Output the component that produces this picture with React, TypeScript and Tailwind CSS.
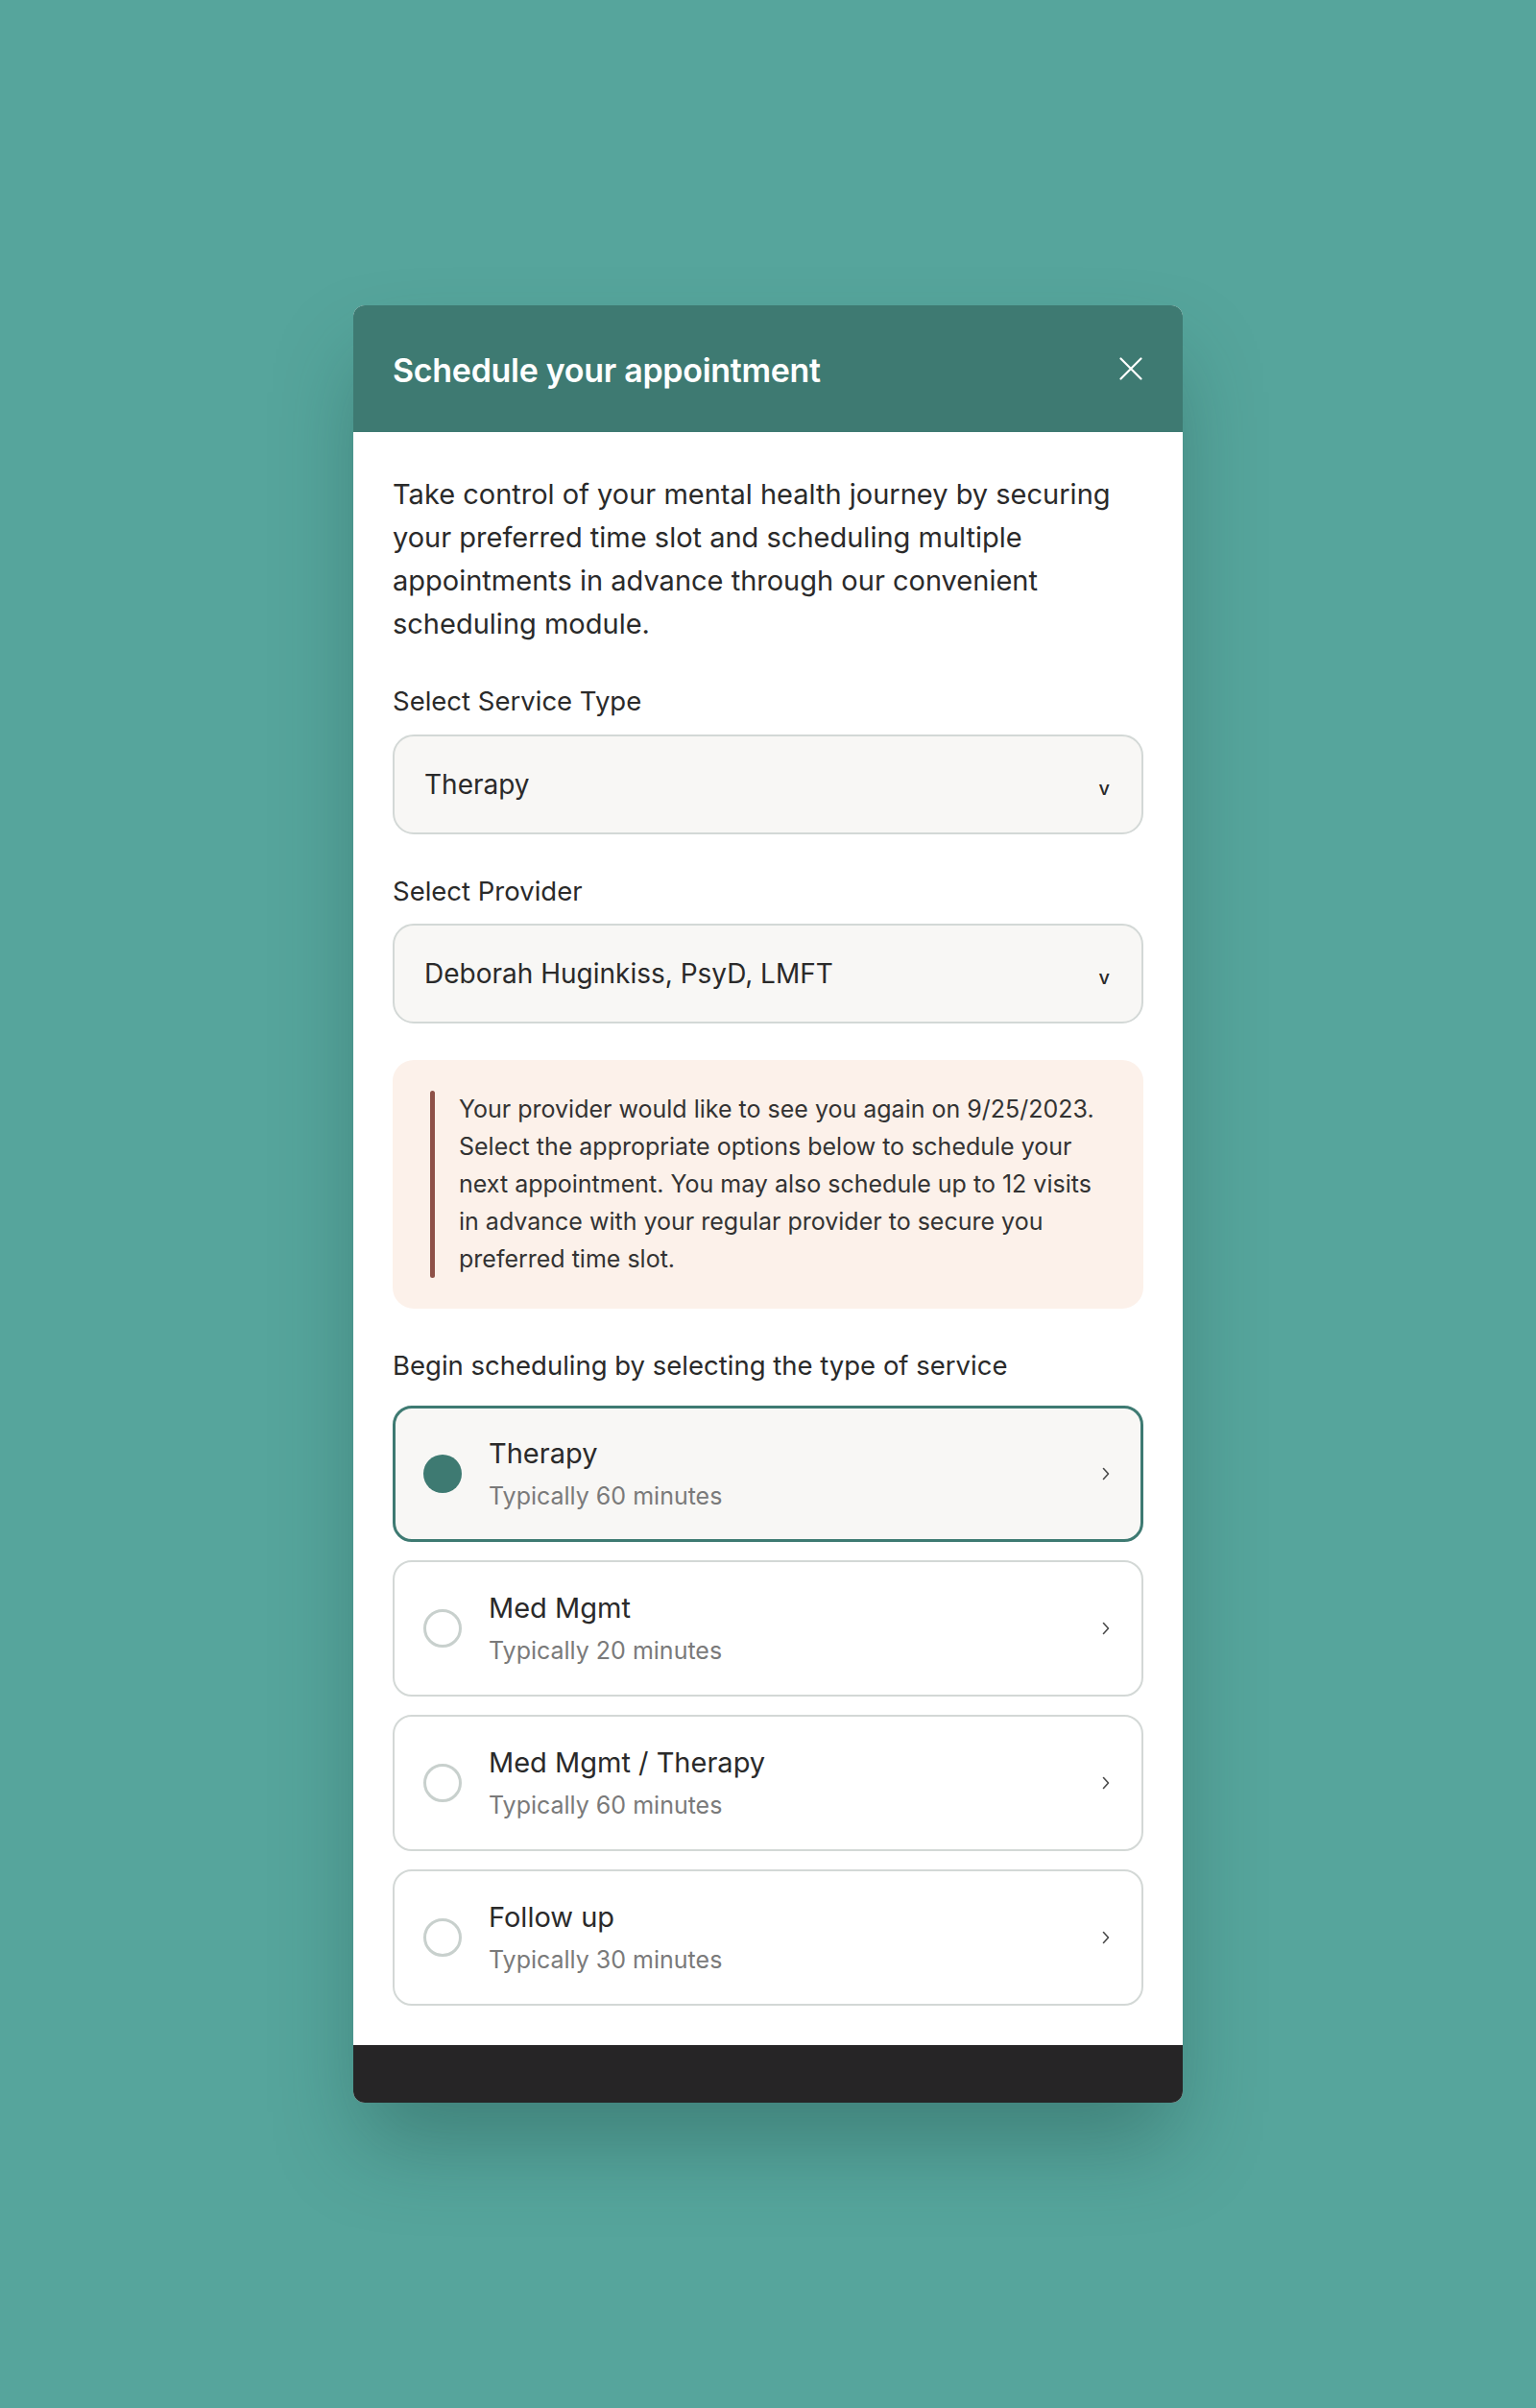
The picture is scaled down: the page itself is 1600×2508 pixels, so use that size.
import React from "react";

const options = [
  { title: "Therapy", sub: "Typically 60 minutes", selected: true },
  { title: "Med Mgmt", sub: "Typically 20 minutes", selected: false },
  { title: "Med Mgmt / Therapy", sub: "Typically 60 minutes", selected: false },
  { title: "Follow up", sub: "Typically 30 minutes", selected: false },
];

function Select({ value }: { value: string }) {
  return (
    <div className="flex h-[104px] items-center justify-between rounded-[22px] border-2 border-[#d3d8d6] bg-[#f8f7f5] pl-[31px] pr-[33px]">
      <span className="text-[28px] leading-[40px] text-[#2a2a2a]">{value}</span>
      <span className="mt-[8px] text-[20px] font-medium leading-[20px] text-[#2a2a2a]">v</span>
    </div>
  );
}

function Chevron() {
  return (
    <svg width="10" height="16" viewBox="0 0 10 16" fill="none">
      <path d="M2.5 2.5 L7.5 8 L2.5 13.5" stroke="#4a4a4a" strokeWidth="1.6" strokeLinecap="round" strokeLinejoin="round" />
    </svg>
  );
}

export default function App() {
  return (
    <div className="flex min-h-[2508px] w-full justify-center bg-[#56a59c] pt-[318px] font-['Inter',sans-serif]">
      <div className="h-fit w-[864px] overflow-hidden rounded-[12px] bg-white shadow-[0_50px_90px_-10px_rgba(20,60,55,0.35)]">
        <div className="flex h-[132px] items-center justify-between bg-[#3e7a72] pl-[41px] pr-[42px]">
          <h1 className="mt-[2px] text-[34px] font-semibold tracking-[-0.3px] text-white">Schedule your appointment</h1>
          <svg width="24" height="24" viewBox="0 0 24 24" fill="none">
            <path d="M1.5 1.5 L22.5 22.5 M22.5 1.5 L1.5 22.5" stroke="white" strokeWidth="2.2" strokeLinecap="round" />
          </svg>
        </div>

        <div className="px-[41px] pb-[41px] pt-[42px]">
          <p className="text-[29px] leading-[45px] text-[#2a2a2a]">
            Take control of your mental health journey by securing your preferred time slot and scheduling multiple appointments in advance through our convenient scheduling module.
          </p>

          <div className="mt-[40px] text-[27.5px] leading-[36px] text-[#2a2a2a]">Select Service Type</div>
          <div className="mt-[17px]">
            <Select value="Therapy" />
          </div>

          <div className="mt-[41px] text-[27.5px] leading-[36px] text-[#2a2a2a]">Select Provider</div>
          <div className="mt-[16px]">
            <Select value="Deborah Huginkiss, PsyD, LMFT" />
          </div>

          <div className="mt-[38px] flex rounded-[22px] bg-[#fcf1ea] pb-[32px] pl-[39px] pr-[36px] pt-[32px]">
            <div className="w-[5px] shrink-0 rounded-full bg-[#8e5148]" />
            <p className="pl-[25px] text-[25px] leading-[39px] text-[#333333]">
              Your provider would like to see you again on 9/25/2023. Select the appropriate options below to schedule your next appointment. You may also schedule up to 12 visits in advance with your regular provider to secure you preferred time slot.
            </p>
          </div>

          <div className="mt-[41px] text-[27.5px] leading-[36px] text-[#2a2a2a]">Begin scheduling by selecting the type of service</div>

          <div className="mt-[24px] flex flex-col gap-[19px]">
            {options.map((o) => (
              <div
                key={o.title}
                className={
                  o.selected
                    ? "flex h-[142px] items-center rounded-[20px] border-[3px] border-[#3e7a72] bg-[#f8f7f5] pl-[29px] pr-[31px]"
                    : "flex h-[142px] items-center rounded-[20px] border-2 border-[#d3d8d6] bg-white pl-[30px] pr-[32px]"
                }
              >
                {o.selected ? (
                  <div className="h-[40px] w-[40px] shrink-0 rounded-full bg-[#3e7a72]" />
                ) : (
                  <div className="h-[40px] w-[40px] shrink-0 rounded-full border-[3px] border-[#c8d0cd]" />
                )}
                <div className="ml-[28px] flex flex-1 flex-col">
                  <span className="text-[29px] leading-[40px] text-[#2a2a2a]">{o.title}</span>
                  <span className="mt-[6px] text-[25px] leading-[36px] text-[#7a7a7a]">{o.sub}</span>
                </div>
                <Chevron />
              </div>
            ))}
          </div>
        </div>

        <div className="h-[60px] bg-[#262526]" />
      </div>
    </div>
  );
}
